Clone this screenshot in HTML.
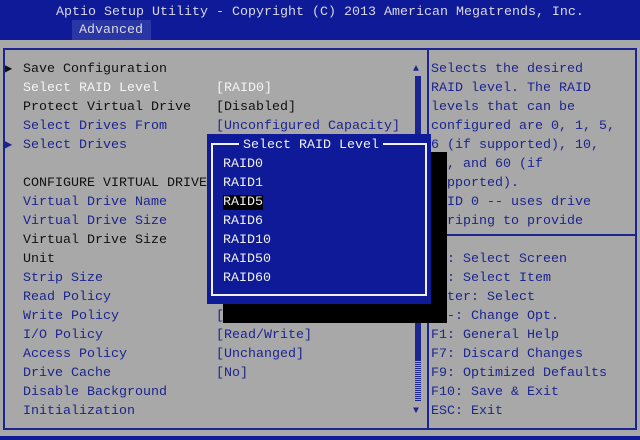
<!DOCTYPE html>
<html><head><style>
*{margin:0;padding:0;box-sizing:border-box}
body{width:640px;height:440px;background:#a8a8a8;position:relative;overflow:hidden;font-family:"Liberation Mono",monospace;font-size:13.33px;line-height:19px;color:#111}
.a{position:absolute;white-space:pre}
.b{color:#1c2490}.w{color:#f4f4f4}
</style></head><body>
<div class="a" style="left:0;top:0;width:640px;height:40px;background:#0e1a98"></div>
<div class="a" style="left:0;top:3px;width:640px;text-align:center;color:#d8d8e0">Aptio Setup Utility - Copyright (C) 2013 American Megatrends, Inc.</div>
<div class="a" style="left:72px;top:20px;width:79px;height:20px;background:#2a36a4;color:#d8d8e0;padding-left:7px;line-height:21px">Advanced</div>
<div class="a" style="left:0;top:436px;width:640px;height:4px;background:#0e1a98"></div>
<div class="a" style="left:3px;top:48px;width:634px;height:382px;border:2px solid #1c2490"></div>
<div class="a" style="left:427px;top:48px;width:2px;height:382px;background:#1c2490"></div>
<div class="a" style="left:429px;top:234px;width:208px;height:2px;background:#1c2490"></div>
<div class="a" style="left:415px;top:76px;width:6px;height:285px;background:#1c2490"></div>
<div class="a" style="left:415px;top:361px;width:6px;height:40px;background:repeating-linear-gradient(0deg,#1c2490 0 1px,#a8a8a8 1px 2px)"></div>
<div class="a b" style="left:413px;top:60px;font-size:10px">▲</div>
<div class="a b" style="left:413px;top:402px;font-size:10px">▼</div>
<div class="a" style="left:5px;top:60px;font-size:12px">▶</div>
<div class="a b" style="left:5px;top:136px;font-size:12px">▶</div>
<div class="a" style="left:23px;top:60px">Save Configuration
<span class="w">Select RAID Level</span>
Protect Virtual Drive
<span class="b">Select Drives From</span>
<span class="b">Select Drives</span>

CONFIGURE VIRTUAL DRIVE
<span class="b">Virtual Drive Name</span>
<span class="b">Virtual Drive Size</span>
Virtual Drive Size
Unit
<span class="b">Strip Size</span>
<span class="b">Read Policy</span>
<span class="b">Write Policy</span>
<span class="b">I/O Policy</span>
<span class="b">Access Policy</span>
<span class="b">Drive Cache</span>
<span class="b">Disable Background</span>
<span class="b">Initialization</span></div>
<div class="a" style="left:216px;top:60px">
<span class="w">[RAID0]</span>
[Disabled]
<span class="b">[Unconfigured Capacity]</span>








<span class="b">[</span>
<span class="b">[Direct]</span>
<span class="b">[Read/Write]</span>
<span class="b">[Unchanged]</span>
<span class="b">[No]</span></div>
<div class="a b" style="left:431px;top:60px">Selects the desired
RAID level. The RAID
levels that can be
configured are 0, 1, 5,
6 (if supported), 10,
50, and 60 (if
supported).
RAID 0 -- uses drive
striping to provide

→←: Select Screen
↑↓: Select Item
Enter: Select
+/-: Change Opt.
F1: General Help
F7: Discard Changes
F9: Optimized Defaults
F10: Save &amp; Exit
ESC: Exit</div>
<div class="a" style="left:223px;top:152px;width:224px;height:171px;background:#000"></div>
<div class="a" style="left:207px;top:134px;width:224px;height:170px;background:#0e1a98"></div>
<div class="a" style="left:211px;top:143px;width:216px;height:153px;border:2px solid #f0f0f0"></div>
<div class="a" style="left:239px;top:136px;background:#0e1a98;color:#f0f0f0;padding:0 4px">Select RAID Level</div>
<div class="a" style="left:223px;top:155px;color:#f0f0f0">RAID0
RAID1
<span style="background:#000">RAID5</span>
RAID6
RAID10
RAID50
RAID60</div>
</body></html>
